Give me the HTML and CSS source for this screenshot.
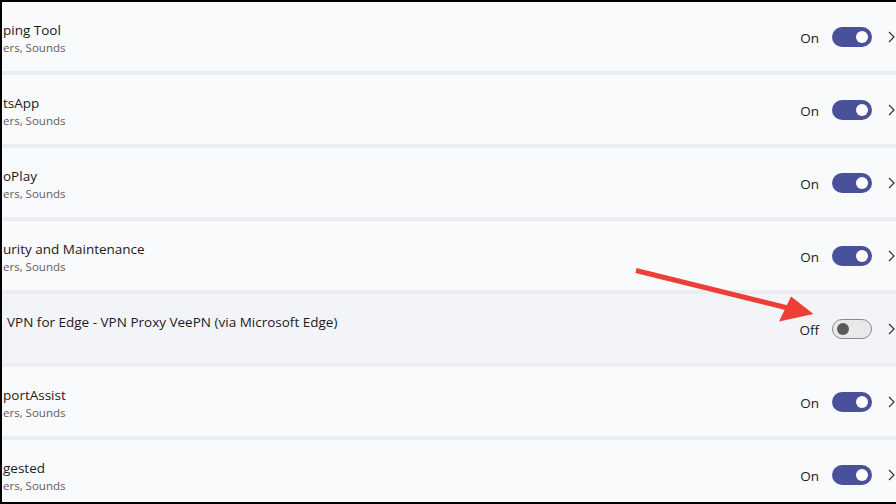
FILE: index.html
```html
<!DOCTYPE html>
<html lang="en">
<head>
<meta charset="utf-8">
<title>Notifications</title>
<link rel="stylesheet" href="styles.css">
</head>
<body>
<div class="frame">
  <div class="list">
    <div class="card">
      <div class="text"><div class="title">ping Tool</div><div class="sub">ers, Sounds</div></div>
      <div class="controls"><span class="state">On</span><span class="toggle on"><span class="knob"></span></span><svg class="chev" viewBox="0 0 12 12"><path d="M3 1l5 5-5 5"/></svg></div>
    </div>
    <div class="card">
      <div class="text"><div class="title">tsApp</div><div class="sub">ers, Sounds</div></div>
      <div class="controls"><span class="state">On</span><span class="toggle on"><span class="knob"></span></span><svg class="chev" viewBox="0 0 12 12"><path d="M3 1l5 5-5 5"/></svg></div>
    </div>
    <div class="card">
      <div class="text"><div class="title">oPlay</div><div class="sub">ers, Sounds</div></div>
      <div class="controls"><span class="state">On</span><span class="toggle on"><span class="knob"></span></span><svg class="chev" viewBox="0 0 12 12"><path d="M3 1l5 5-5 5"/></svg></div>
    </div>
    <div class="card">
      <div class="text"><div class="title">urity and Maintenance</div><div class="sub">ers, Sounds</div></div>
      <div class="controls"><span class="state">On</span><span class="toggle on"><span class="knob"></span></span><svg class="chev" viewBox="0 0 12 12"><path d="M3 1l5 5-5 5"/></svg></div>
    </div>
    <div class="card card-hover">
      <div class="text text-vpn"><div class="title">VPN for Edge - VPN Proxy VeePN (via Microsoft Edge)</div><div class="sub">&nbsp;</div></div>
      <div class="controls"><span class="state">Off</span><span class="toggle off"><span class="knob"></span></span><svg class="chev" viewBox="0 0 12 12"><path d="M3 1l5 5-5 5"/></svg></div>
    </div>
    <div class="card">
      <div class="text"><div class="title">portAssist</div><div class="sub">ers, Sounds</div></div>
      <div class="controls"><span class="state">On</span><span class="toggle on"><span class="knob"></span></span><svg class="chev" viewBox="0 0 12 12"><path d="M3 1l5 5-5 5"/></svg></div>
    </div>
    <div class="card">
      <div class="text"><div class="title">gested</div><div class="sub">ers, Sounds</div></div>
      <div class="controls"><span class="state">On</span><span class="toggle on"><span class="knob"></span></span><svg class="chev" viewBox="0 0 12 12"><path d="M3 1l5 5-5 5"/></svg></div>
    </div>
  </div>
  <svg class="arrow" viewBox="0 0 896 504" width="896" height="504">
    <line x1="636" y1="270.5" x2="790" y2="308.5" stroke="#ee3e35" stroke-width="5"/>
    <polygon points="791,296.5 813.5,314 779,321.5" fill="#ee3e35"/>
  </svg>
</div>
</body>
</html>
```

FILE: styles.css
```css
html, body {
  margin: 0;
  padding: 0;
  background: #000;
}
body {
  width: 896px;
  height: 504px;
  overflow: hidden;
  font-family: "Open Sans", "Noto Sans", "Liberation Sans", sans-serif;
}
.frame {
  position: relative;
  box-sizing: border-box;
  width: 896px;
  height: 504px;
  border-top: 2px solid #000;
  border-left: 2px solid #000;
  border-bottom: 2px solid #000;
  background: #eaedf1;
  overflow: hidden;
}
.list {
  display: flex;
  flex-direction: column;
  gap: 4px;
  width: 920px;
}
.card {
  display: flex;
  align-items: center;
  height: 69px;
  flex: none;
  background: #f9fafc;
  padding-left: 1px;
  padding-right: 24px;
  box-sizing: border-box;
}
.card-hover {
  background: #f3f4f7;
}
.text {
  align-self: flex-start;
  padding-top: 18px;
}
.text-vpn {
  padding-left: 4px;
}
.title {
  font-size: 13.5px;
  line-height: 20px;
  color: #1b1b1b;
  white-space: nowrap;
}
.sub {
  font-size: 11.5px;
  line-height: 16px;
  color: #5f5f5f;
  white-space: nowrap;
}
.controls {
  margin-left: auto;
  display: flex;
  align-items: center;
}
.state {
  width: 40px;
  text-align: right;
  font-size: 13.5px;
  line-height: 20px;
  color: #1b1b1b;
  margin-right: 13px;
  position: relative;
  top: 1px;
}
.toggle {
  position: relative;
  box-sizing: border-box;
  width: 40px;
  height: 20px;
  border-radius: 10px;
  display: block;
}
.toggle.on {
  background: #4a519b;
}
.toggle.off {
  background: #e9e9e9;
  border: 1px solid #8a8a8a;
}
.knob {
  position: absolute;
  top: 50%;
  width: 12px;
  height: 12px;
  margin-top: -6px;
  border-radius: 50%;
}
.toggle.on .knob {
  right: 4px;
  background: #fff;
}
.toggle.off .knob {
  left: 4px;
  background: #5a5a5a;
}
.chev {
  width: 12px;
  height: 12px;
  margin-left: 14px;
  fill: none;
  stroke: #333;
  stroke-width: 1.2;
}
.arrow {
  position: absolute;
  left: -2px;
  top: -2px;
}
```
